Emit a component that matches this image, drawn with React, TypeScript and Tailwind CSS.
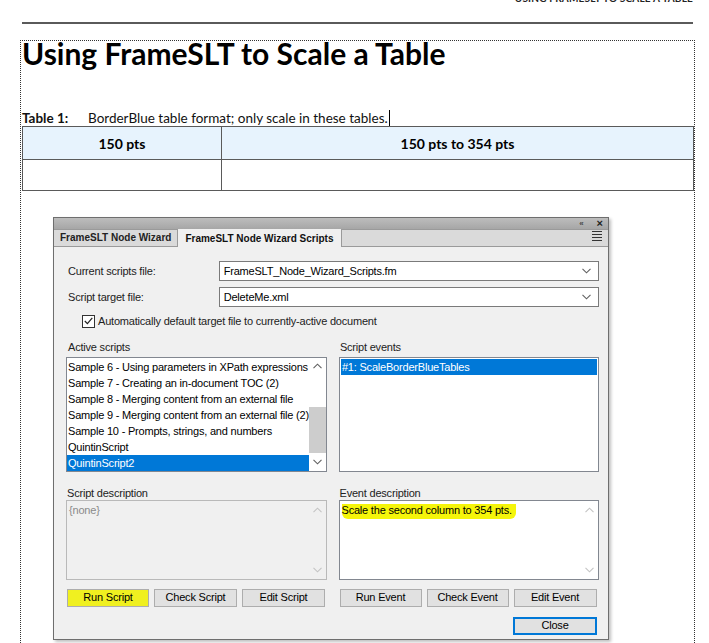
import React from "react";

const ui = { fontFamily: '"Liberation Sans", Arial, sans-serif' };
const doc = { fontFamily: 'Lato, "Open Sans", sans-serif' };

function Chevron({ light = false, up = false }: { light?: boolean; up?: boolean }) {
    return (
        <svg width="9" height="6" viewBox="0 0 9 6" className={up ? "rotate-180" : ""}>
            <path d="M0.5 0.8 L4.5 4.8 L8.5 0.8" fill="none" stroke={light ? "#c4c4c4" : "#606060"} strokeWidth="1.1" />
        </svg>
    );
}

function Select({ value }: { value: string }) {
    return (
        <div className="flex items-center justify-between w-[381px] h-[20px] bg-white border border-[#7a7a7a] pl-[4px] pr-[7px] text-black">
            <span>{value}</span>
            <Chevron />
        </div>
    );
}

function Button({ label, highlight = false, primary = false, width = "w-[82px]" }: { label: string; highlight?: boolean; primary?: boolean; width?: string }) {
    return (
        <div className={`${width} h-[18px] flex items-center justify-center text-black ${highlight ? "bg-[#f0f020]" : "bg-[#e1e1e1]"} ${primary ? "border-2 border-[#0078d7]" : "border border-[#adadad]"}`}>
            {label}
        </div>
    );
}

const scripts = [
    "Sample 6 - Using parameters in XPath expressions",
    "Sample 7 - Creating an in-document TOC (2)",
    "Sample 8 - Merging content from an external file",
    "Sample 9 - Merging content from an external file (2)",
    "Sample 10 - Prompts, strings, and numbers",
    "QuintinScript",
    "QuintinScript2",
];

function Dialog() {
    return (
        <div className="w-[556px] h-[423px] bg-[#f0f0f0] border border-[#6e6e6e] shadow-[2px_2px_3px_rgba(0,0,0,0.25)] flex flex-col" style={ui}>
            <div className="h-[11px] bg-gradient-to-b from-[#bdbdbd] to-[#a6a6a6] flex items-center justify-end gap-[14px] pr-[5px]">
                <span className="text-[8px] leading-none text-[#444] font-bold tracking-[-1px]">&lsaquo;&lsaquo;</span>
                <span className="text-[11px] leading-none text-[#222] font-bold">&times;</span>
            </div>
            <div className="h-[18px] bg-[#dadada] border-t border-[#8a8a8a] border-b border-[#9a9a9a] flex items-end">
                <div className="h-[17px] px-[6px] flex items-center text-[10px] font-bold text-[#222] border-r border-[#9a9a9a]">FrameSLT Node Wizard</div>
                <div className="h-[18px] -mb-px px-[7px] flex items-center text-[10px] font-bold text-[#111] bg-[#f0f0f0] border-r border-[#9a9a9a]">FrameSLT Node Wizard Scripts</div>
                <div className="flex-1" />
                <div className="w-[10px] flex flex-col gap-[2px] mr-[6px] mb-[5px]">
                    <div className="h-px bg-[#333]" />
                    <div className="h-px bg-[#333]" />
                    <div className="h-px bg-[#333]" />
                    <div className="h-px bg-[#333]" />
                </div>
            </div>

            <div className="flex flex-col pt-[14px] pl-[12px] pr-[9px] text-[11px] text-black tracking-[-0.2px]">
                <div className="flex items-center">
                    <span className="w-[153px] pl-[2px] text-[#222]">Current scripts file:</span>
                    <Select value="FrameSLT_Node_Wizard_Scripts.fm" />
                </div>
                <div className="flex items-center mt-[6px]">
                    <span className="w-[153px] pl-[2px] text-[#222]">Script target file:</span>
                    <Select value="DeleteMe.xml" />
                </div>
                <div className="flex items-center mt-[6px] ml-[16px]">
                    <div className="w-[13px] h-[13px] bg-white border border-[#333] flex items-center justify-center">
                        <svg width="9" height="8" viewBox="0 0 9 8"><path d="M0.8 4 L3.4 6.6 L8.3 0.8" fill="none" stroke="#222" strokeWidth="1.2" /></svg>
                    </div>
                    <span className="ml-[3px] text-[#222]">Automatically default target file to currently-active document</span>
                </div>

                <div className="flex gap-[12px] mt-[10px]">
                    <div className="flex flex-col w-[262px]">
                        <span className="pl-[2px] leading-[14px] text-[#222]">Active scripts</span>
                        <div className="mt-[3px] h-[115px] bg-white border border-[#828790] flex">
                            <div className="flex-1 flex flex-col pt-px">
                                {scripts.map((s, i) => (
                                    <div key={s} className={`h-[16px] leading-[16px] pl-[1px] whitespace-nowrap ${i === scripts.length - 1 ? "bg-[#0078d7] text-white" : ""}`}>{s}</div>
                                ))}
                            </div>
                            <div className="w-[17px] flex flex-col items-center">
                                <div className="h-[17px] flex items-center justify-center"><Chevron up /></div>
                                <div className="flex-1 w-full flex flex-col">
                                    <div className="h-[32px]" />
                                    <div className="h-[46px] bg-[#cdcdcd]" />
                                </div>
                                <div className="h-[17px] flex items-center justify-center"><Chevron /></div>
                            </div>
                        </div>
                    </div>
                    <div className="flex flex-col w-[262px]">
                        <span className="pl-[1px] leading-[14px] text-[#222]">Script events</span>
                        <div className="mt-[3px] h-[115px] bg-white border border-[#828790] pt-px px-px">
                            <div className="h-[16px] leading-[16px] bg-[#0078d7] text-white pl-[1px]">#1: ScaleBorderBlueTables</div>
                        </div>
                    </div>
                </div>

                <div className="flex gap-[12px] mt-[14px]">
                    <div className="flex flex-col w-[262px]">
                        <span className="pl-[1px] leading-[14px] text-[#222]">Script description</span>
                        <div className="h-[80px] bg-[#f0f0f0] border border-[#b9b9b9] flex">
                            <div className="flex-1 pl-[2px] pt-[1px] text-[#8a8a8a]">{"{none}"}</div>
                            <div className="w-[17px] flex flex-col items-center justify-between py-[6px]">
                                <Chevron light up />
                                <Chevron light />
                            </div>
                        </div>
                        <div className="flex gap-[5px] mt-[9px] ml-px">
                            <Button label="Run Script" highlight />
                            <Button label="Check Script" width="w-[83px]" />
                            <Button label="Edit Script" width="w-[83px]" />
                        </div>
                    </div>
                    <div className="flex flex-col w-[262px]">
                        <span className="pl-[1px] leading-[14px] text-[#222]">Event description</span>
                        <div className="h-[80px] bg-white border border-[#828790] flex">
                            <div className="flex-1 pl-[2px] pt-[1px]">
                                <span className="bg-[#f5f50a] rounded-b-[6px] pr-[4px] pb-[3px]">Scale the second column to 354 pts.</span>
                            </div>
                            <div className="w-[17px] flex flex-col items-center justify-between py-[6px]">
                                <Chevron light up />
                                <Chevron light />
                            </div>
                        </div>
                        <div className="flex gap-[5px] mt-[9px] ml-px">
                            <Button label="Run Event" width="w-[82px]" />
                            <Button label="Check Event" width="w-[82px]" />
                            <Button label="Edit Event" width="w-[83px]" />
                        </div>
                        <div className="flex justify-end mt-[10px] pr-[2px]">
                            <Button label="Close" primary width="w-[84px]" />
                        </div>
                    </div>
                </div>
            </div>
        </div>
    );
}

export default function App() {
    return (
        <div className="w-[709px] h-[643px] overflow-hidden bg-white flex flex-col" style={doc}>
            <div className="h-[22px] flex justify-end pr-[16px]">
                <span className="-mt-[9px] text-[10px] font-bold tracking-[0.2px] text-[#222] h-[12px]">USING FRAMESLT TO SCALE A TABLE</span>
            </div>
            <div className="ml-[22px] w-[671px] h-[2px] bg-[#5a5a5a]" />
            <div className="ml-[20px] w-[675px] mt-[16px] flex-1 border-t border-l border-r border-dotted border-[#333] flex flex-col">
                <h1 className="text-[30px] leading-[28px] font-bold text-black ml-px -mt-[2px]">Using FrameSLT to Scale a Table</h1>
                <div className="mt-[43px] flex items-center text-[13.5px] leading-[16px] text-[#111] ml-px">
                    <span className="font-bold w-[66px]">Table 1:</span>
                    <span>BorderBlue table format; only scale in these tables.</span>
                    <span className="w-px h-[16px] bg-black ml-px" />
                </div>
                <div className="ml-px w-[672px] border border-[#5a5a5a] text-[14px]">
                    <div className="flex h-[33px] bg-[#e7f3fd] border-b border-[#5a5a5a] font-bold">
                        <div className="w-[199px] border-r border-[#5a5a5a] flex items-center justify-center">150 pts</div>
                        <div className="flex-1 flex items-center justify-center">150 pts to 354 pts</div>
                    </div>
                    <div className="flex h-[30px]">
                        <div className="w-[199px] border-r border-[#5a5a5a]" />
                        <div className="flex-1" />
                    </div>
                </div>
                <div className="ml-[32px] mt-[26px]">
                    <Dialog />
                </div>
            </div>
        </div>
    );
}
